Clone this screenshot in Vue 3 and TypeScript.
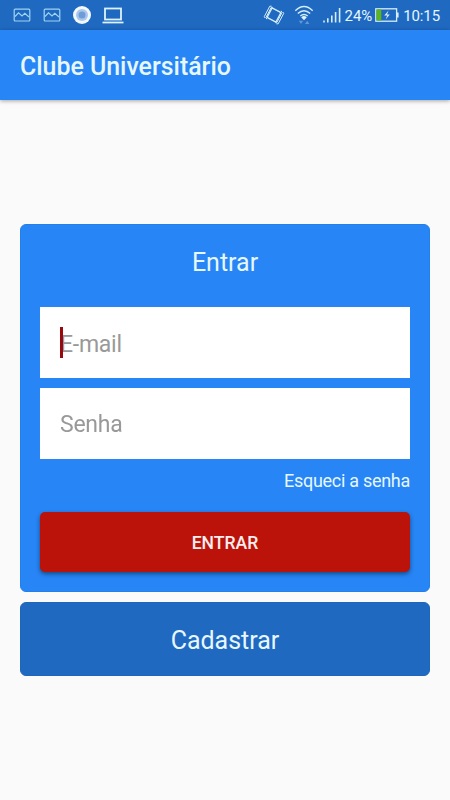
<script setup lang="ts">
import { onMounted, ref } from 'vue'

const email = ref('')
const password = ref('')
const emailField = ref<HTMLInputElement | null>(null)

onMounted(() => emailField.value?.focus())
</script>

<template>
  <div class="screen">
    <div class="status">
      <div class="notifications">
        <svg v-for="n in 2" :key="n" class="picture" width="18" height="14" viewBox="0 0 18 14">
          <rect x="1.2" y="1.2" width="15.6" height="11.8" rx="1" />
          <path d="M2 8.5 5.5 4.8 9 8l2.8-2.6L16 9" />
        </svg>
        <svg class="disc" width="18" height="18" viewBox="0 0 18 18">
          <circle cx="9" cy="9" r="9" fill="#f2f8fb" />
          <circle cx="9" cy="9" r="6" fill="#a9c7ed" />
          <circle cx="9" cy="9" r="3.5" fill="#6d9cd9" />
        </svg>
        <svg class="laptop" width="22" height="17" viewBox="0 0 22 17">
          <rect x="3" y="1.5" width="16" height="11" />
          <path d="M.5 15.5h21" />
        </svg>
      </div>
      <div class="system">
        <svg class="vibrate" width="22" height="20" viewBox="0 0 22 20">
          <rect x="6" y="4.6" width="10" height="10.8" rx="1" transform="rotate(28 11 10)" />
          <path d="M8.6 1.2H6.8L1.3 11.6l.8 1.4M9.8 2.4H8.2L3 12.4l.8 1.8M13.4 18.8h1.8L20.7 8.4 19.9 7M12.2 17.6h1.6L19 7.6l-.8-1.8" />
        </svg>
        <svg class="wifi" width="20" height="20" viewBox="0 0 20 20">
          <path d="M1.3 5.8Q10-2.6 18.7 5.8M3.8 8.5q6.2-5.4 12.4 0M6.3 11q3.7-3 7.4 0" />
          <path class="solid" d="M7.2 12.2q2.8-2.2 5.6 0L10 15.2z" />
          <path class="traffic" d="m4.8 15.7 4.4 0-2.2 3.3zM11 19l2.2-3.3 2.2 3.3z" />
        </svg>
        <svg class="signal" width="18" height="16" viewBox="0 0 18 16">
          <path d="M1 15.5v-2M4.8 15.5v-4.2M8.8 15.5V8.5M12.6 15.5V5M16.6 15.5V1" />
        </svg>
        <span class="percent">24%</span>
        <svg class="battery" width="24" height="14" viewBox="0 0 24 14">
          <rect x=".8" y=".8" width="20.8" height="12.4" fill="none" stroke="#d8effa" stroke-width="1.3" />
          <rect x="1.5" y="1.5" width="4.8" height="11" fill="#5db51b" />
          <path d="M22.8 4.5v5" stroke="#d8effa" stroke-width="1.6" />
          <path d="M13.6 2.5 9.2 7.5h3L10.6 11.5 14.8 6.5h-2.8z" fill="#d8effa" />
        </svg>
        <span class="clock">10:15</span>
      </div>
    </div>

    <header class="toolbar">
      <h1>Clube Universitário</h1>
    </header>

    <main>
      <form class="card" @submit.prevent>
        <h2>Entrar</h2>
        <div class="field">
          <span v-if="!email" class="caret"></span>
          <input ref="emailField" v-model="email" type="email" placeholder="E-mail" />
        </div>
        <div class="field">
          <input v-model="password" type="password" placeholder="Senha" />
        </div>
        <a class="forgot">Esqueci a senha</a>
        <button class="submit" type="submit">ENTRAR</button>
      </form>
      <button class="register" type="button">Cadastrar</button>
    </main>
  </div>
</template>

<style>
body {
  margin: 0;
}
</style>

<style scoped>
.screen {
  width: 100%;
  height: 100vh;
  display: flex;
  flex-direction: column;
  overflow: hidden;
  background: #fafafa;
  color: #e6f7ff;
  font-family: Roboto, sans-serif;
}

.screen * {
  box-sizing: border-box;
}

svg {
  display: block;
  flex: none;
}

.status {
  flex: none;
  height: 30px;
  padding: 0 10px 0 13px;
  display: flex;
  align-items: center;
  justify-content: space-between;
  background: #1f69c1;
}

.notifications,
.system {
  display: flex;
  align-items: center;
}

.picture {
  margin-right: 12px;
  fill: none;
  stroke: #9fd4f2;
  stroke-width: 1.2;
}

.laptop {
  margin-left: 11px;
  fill: none;
  stroke: #dcf2fc;
  stroke-width: 1.8;
}

.vibrate,
.wifi,
.signal {
  fill: none;
  stroke: #d3eefa;
  stroke-width: 1;
}

.vibrate rect {
  stroke-width: 1.4;
}

.wifi {
  margin-left: 9px;
  stroke-width: 1.4;
}

.wifi .solid {
  fill: #e0f3fb;
  stroke: none;
}

.wifi .traffic {
  fill: #5f97d8;
  stroke: none;
}

.signal {
  margin-left: 9px;
  stroke-width: 1.6;
}

.percent {
  margin-left: 4px;
  padding-top: 1px;
  font-size: 15px;
  letter-spacing: -0.1px;
  line-height: 30px;
}

.battery {
  margin: 0 4px 0 3px;
}

.clock {
  padding-top: 1px;
  font-size: 15px;
  letter-spacing: -0.1px;
  line-height: 30px;
}

.toolbar {
  flex: none;
  height: 70px;
  padding: 2px 20px 0;
  display: flex;
  align-items: center;
  background: #2785f5;
  box-shadow: 0 1px 4px rgba(0, 0, 0, 0.35);
}

h1,
h2 {
  margin: 0;
}

h1 {
  font-size: 24.9px;
  font-weight: 500;
}

main {
  padding: 124px 20px 0;
  display: flex;
  flex-direction: column;
  gap: 10px;
}

.card {
  height: 368px;
  padding: 0 19px;
  display: flex;
  flex-direction: column;
  border: 1px solid #2480e9;
  border-radius: 6px;
  background: #2785f5;
}

h2 {
  height: 82px;
  padding-top: 22px;
  font-size: 25px;
  font-weight: 400;
  line-height: 32px;
  text-align: center;
}

.field {
  position: relative;
  flex: none;
  height: 71px;
  margin-bottom: 10px;
  padding: 0 20px;
  display: flex;
  background: #fff;
}

.field input {
  width: 100%;
  padding: 3px 0 0;
  border: 0;
  outline: 0;
  background: transparent;
  color: #222;
  caret-color: transparent;
  font: 400 23px Roboto, sans-serif;
  letter-spacing: -0.25px;
}

.field + .field input {
  padding-top: 2px;
}

.field input::placeholder {
  color: #999;
  opacity: 1;
}

.caret {
  position: absolute;
  left: 20px;
  top: 20px;
  width: 2.5px;
  height: 31px;
  background: #98080c;
}

.forgot {
  align-self: flex-end;
  font-size: 18px;
  letter-spacing: -0.28px;
  line-height: 24px;
}

button {
  border: 0;
  color: inherit;
  font-family: inherit;
}

.submit {
  height: 60px;
  margin-top: 19px;
  padding-top: 3px;
  border-radius: 5px;
  background: #bb130a;
  box-shadow: 0 2px 4px rgba(0, 0, 0, 0.45);
  color: #fbeeee;
  font-size: 17.6px;
  font-weight: 500;
}

.register {
  height: 74px;
  padding-top: 4px;
  border: 1px solid #1d66bc;
  border-radius: 6px;
  background: #1f69c1;
  font-size: 25px;
}
</style>
